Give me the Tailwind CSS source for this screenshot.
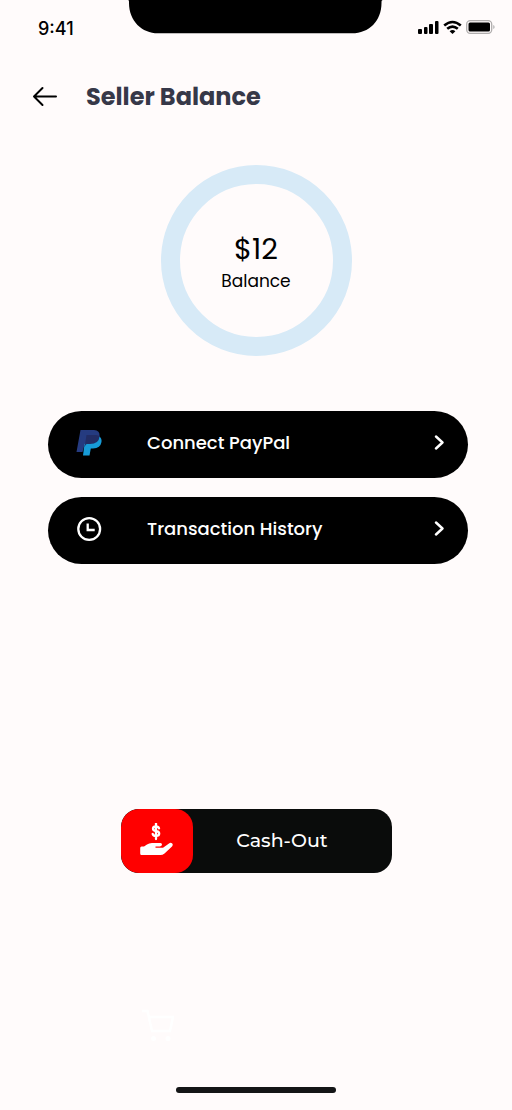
<!DOCTYPE html>
<html lang="en">
<head>
<meta charset="utf-8">
<meta name="viewport" content="width=device-width, initial-scale=1">
<title>Seller Balance</title>
<script src="https://cdn.jsdelivr.net/npm/@tailwindcss/browser@4"></script>
</head>
<body class="min-h-screen bg-[#fffbfb] font-[Poppins,Inter,sans-serif] text-black">
<div class="flex min-h-screen flex-col">
  <!-- Status bar -->
  <div class="grid h-[57px] grid-cols-[1fr_256px_1fr] items-start">
    <div class="pt-[17px] pl-[38px] font-[Inter,sans-serif] text-lg leading-6 font-medium">9:41</div>
    <svg class="h-[34px] w-[256px]" viewBox="0 0 256 34" aria-hidden="true"><path d="M0 0C1 0 1 1 1 3C1 21 14 33.300 30 33.300H224C241 33.300 253.500 21 253.500 3C253.500 1 253.500 0 255 0Z"/></svg>
    <div class="flex items-center justify-end gap-1 pt-5 pr-[17px]">
      <svg class="h-[14px] w-[21px]" viewBox="0 0 21 14" aria-label="Signal"><rect x="0" y="9" width="4" height="5" rx="1"/><rect x="6" y="7" width="3.500" height="7" rx="1"/><rect x="11" y="4" width="4" height="10" rx="1"/><rect x="17" y="1" width="3.500" height="13" rx="1"/></svg>
      <svg class="h-[14px] w-[19px]" viewBox="0 0 19 14" fill="none" stroke="#000" stroke-width="2.600" aria-label="Wi-Fi"><path d="M1.200 5.500Q9.500-1.500 17.800 5.500M4.200 8.800Q9.500 4.300 14.800 8.800"/><path d="M6.600 11.200Q9.500 8.900 12.400 11.200L9.500 14Z" fill="#000" stroke="none"/></svg>
      <svg class="h-[14px] w-[29px]" viewBox="0 0 29 14" aria-label="Battery"><rect x=".7" y=".7" width="25" height="12.600" rx="3.500" fill="none" stroke="#b0adad" stroke-width="1.300"/><rect x="2.500" y="2.500" width="21.500" height="9" rx="1.500"/><path d="M27.300 5v4q1.300-.6 1.300-2T27.300 5" fill="#aaa"/></svg>
    </div>
  </div>

  <header class="flex h-20 items-center gap-7 pl-8">
    <button type="button" aria-label="Back">
      <svg class="h-6 w-[26px]" viewBox="0 0 26 24" fill="none" stroke="#000" stroke-width="2" stroke-linecap="round" stroke-linejoin="round"><path d="M24 11.500H2M10.500 3L2 11.500L10.500 20"/></svg>
    </button>
    <h1 class="text-2xl leading-8 font-bold text-[#363848]">Seller Balance</h1>
  </header>

  <main class="flex flex-1 flex-col items-center">
    <section class="mt-7 flex size-[191px] flex-col items-center justify-center rounded-full border-[19px] border-[#d7eaf7] pt-1">
      <p class="text-[29px] leading-9">$12</p>
      <p class="text-[17px] leading-7">Balance</p>
    </section>

    <nav class="mt-[55px] flex w-full flex-col gap-[19px] pr-11 pl-12">
      <a href="#paypal" class="flex h-[67px] items-center rounded-full bg-black pr-[23px] pb-1 pl-7 text-lg font-medium text-white">
        <svg class="h-[26px] w-[27px]" viewBox="0 0 27 26" aria-hidden="true"><path fill="#253b80" d="M4.500 0H18Q24 .5 23.600 6L20 13L12 15H8.500L6.500 22H.5Z"/><path fill="#179bd7" d="M23.300 6.500Q26 8 25.500 12Q24.500 18 17 18.500H14.800L13.500 25.500H7L8.500 14Z"/><path fill="#222d65" d="M10.500 5H20Q22.500 5 23.600 6.500Q22.800 14 14 14H11Q9.500 14 8.500 17.500Z"/></svg>
        <span class="flex-1 pl-11">Connect PayPal</span>
        <svg class="h-4 w-[11px]" viewBox="0 0 11 16" fill="none" stroke="#fff" stroke-width="2.400" stroke-linecap="round" stroke-linejoin="round" aria-hidden="true"><path d="M2 1.500L8.500 7.500L2 13.500"/></svg>
      </a>
      <a href="#history" class="flex h-[67px] items-center rounded-full bg-black pr-[23px] pb-1 pl-7 text-lg font-medium text-white">
        <svg class="h-[26px] w-[27px]" viewBox="0 0 27 26" fill="none" stroke="#fff" stroke-width="2.300" aria-hidden="true"><circle cx="13.200" cy="13" r="10.900"/><path d="M11.700 7.500V14H18.700"/></svg>
        <span class="flex-1 pl-11">Transaction History</span>
        <svg class="h-4 w-[11px]" viewBox="0 0 11 16" fill="none" stroke="#fff" stroke-width="2.400" stroke-linecap="round" stroke-linejoin="round" aria-hidden="true"><path d="M2 1.500L8.500 7.500L2 13.500"/></svg>
      </a>
    </nav>

    <button type="button" class="mt-[245px] flex h-16 w-[271px] items-center overflow-hidden rounded-[18px] bg-[#0a0c0b] text-[19px] text-white">
      <span class="flex h-full w-[72px] items-center justify-center rounded-[18px] bg-[#ff0000] pb-1">
        <svg class="h-8 w-[33px]" viewBox="0 0 33 32" fill="#fff" aria-hidden="true">
          <path d="M16 0V16M19 5.300Q18.500 3.500 16 3.500Q13 3.500 13 5.800Q13 7.500 16 8Q19.200 8.600 19.200 10.600Q19.200 13 16 13Q13.200 13 12.700 11" fill="none" stroke="#fff" stroke-width="2.300" stroke-linecap="round"/>
          <path d="M1.500 23.500H4L7 21.500Q9 20 12 20H20.500Q22 20 22 21.500Q22 23 20 23.500H15.500V24.800H23L29 20.500Q30.500 19.300 32 20.300Q33.500 21.700 32 23.500L24.500 30.500Q22.500 32 20.500 32H1.500Q.2 32 .2 30.500V25Q.2 23.500 1.500 23.500Z"/>
        </svg>
      </span>
      <span class="flex-1 pr-5 font-[Montserrat,Inter,sans-serif] font-medium">Cash-Out</span>
    </button>
  </main>

  <footer class="flex flex-col pb-[17px]">
    <svg class="mb-[45px] ml-[142px] h-[34px] w-8" viewBox="0 0 32 34" fill="none" stroke="#fff" stroke-width="2.500" aria-hidden="true"><path d="M0 3H5.500L10 23H28L31 9H7"/><circle cx="11.500" cy="30.500" r="2.500" fill="#fff" stroke="none"/><circle cx="26" cy="30.500" r="2.500" fill="#fff" stroke="none"/></svg>
    <div class="h-1.5 w-40 self-center rounded-full bg-[#141516]"></div>
  </footer>
</div>
</body>
</html>
